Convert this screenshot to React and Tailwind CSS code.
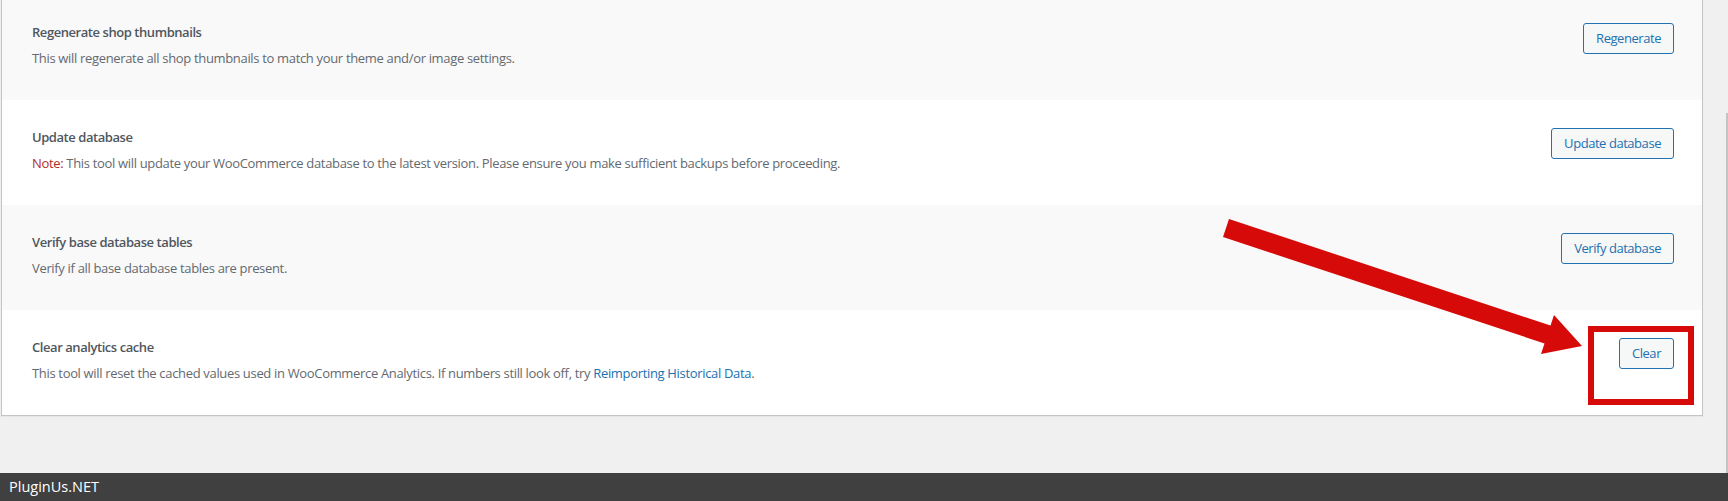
import React from "react";

const font = { fontFamily: '"Open Sans", "Noto Sans", Arial, sans-serif' };

function Row({ title, desc, button, striped }) {
  return (
    <div
      className={`flex items-start justify-between h-[105px] pl-[30px] pr-[28px] pt-[27px] ${
        striped ? "bg-[#f9f9f9]" : "bg-white"
      }`}
    >
      <div className="flex flex-col">
        <div className="text-[13px] leading-5 font-semibold tracking-[-0.44px] text-[#50575e]">
          {title}
        </div>
        <div className="mt-[6px] text-[13px] leading-5 tracking-[-0.33px] text-[#646970]">
          {desc}
        </div>
      </div>
      <button className="mt-px h-[31px] px-[12px] rounded-[3px] border border-[#2271b1] bg-[#f6f7f7] text-[13px] tracking-[-0.45px] text-[#2271b1] leading-none whitespace-nowrap">
        {button}
      </button>
    </div>
  );
}

export default function App() {
  return (
    <div
      className="relative w-[1728px] h-[501px] overflow-hidden bg-[#f0f0f1] flex flex-col"
      style={font}
    >
      <div className="ml-px w-[1702px] -mt-[5px] border-l border-r border-b border-[#c3c4c7] shadow-[0_1px_1px_rgba(0,0,0,0.04)] flex flex-col">
        <Row
          striped
          title="Regenerate shop thumbnails"
          desc="This will regenerate all shop thumbnails to match your theme and/or image settings."
          button="Regenerate"
        />
        <Row
          title="Update database"
          desc={
            <>
              <span className="text-[#b32d2e]">Note:</span> This tool will update your WooCommerce
              database to the latest version. Please ensure you make sufficient backups before
              proceeding.
            </>
          }
          button="Update database"
        />
        <Row
          striped
          title="Verify base database tables"
          desc="Verify if all base database tables are present."
          button="Verify database"
        />
        <Row
          title="Clear analytics cache"
          desc={
            <>
              This tool will reset the cached values used in WooCommerce Analytics. If numbers still
              look off, try <span className="text-[#2271b1]">Reimporting Historical Data</span>.
            </>
          }
          button="Clear"
        />
      </div>

      <div className="flex-1" />

      <div className="h-[28px] bg-[#404040] flex items-center pl-[9px]">
        <span className="text-[14.5px] text-white">PluginUs.NET</span>
      </div>

      {/* scrollbar strip */}
      <div className="absolute right-0 top-[113px] h-[360px] w-[2px] bg-[#c4c4c4]" />

      {/* annotation: red box */}
      <div className="absolute left-[1588px] top-[326px] w-[106px] h-[79px] border-[6px] border-[#d70a0a] pointer-events-none" />

      {/* annotation: arrow */}
      <svg
        className="absolute left-0 top-0 pointer-events-none"
        width="1728"
        height="501"
        viewBox="0 0 1728 501"
      >
        <polygon
          points="1229,219 1550.5,325.5 1554,315 1582,346 1541,354 1544.5,343.5 1223,237"
          fill="#d70a0a"
        />
      </svg>
    </div>
  );
}
